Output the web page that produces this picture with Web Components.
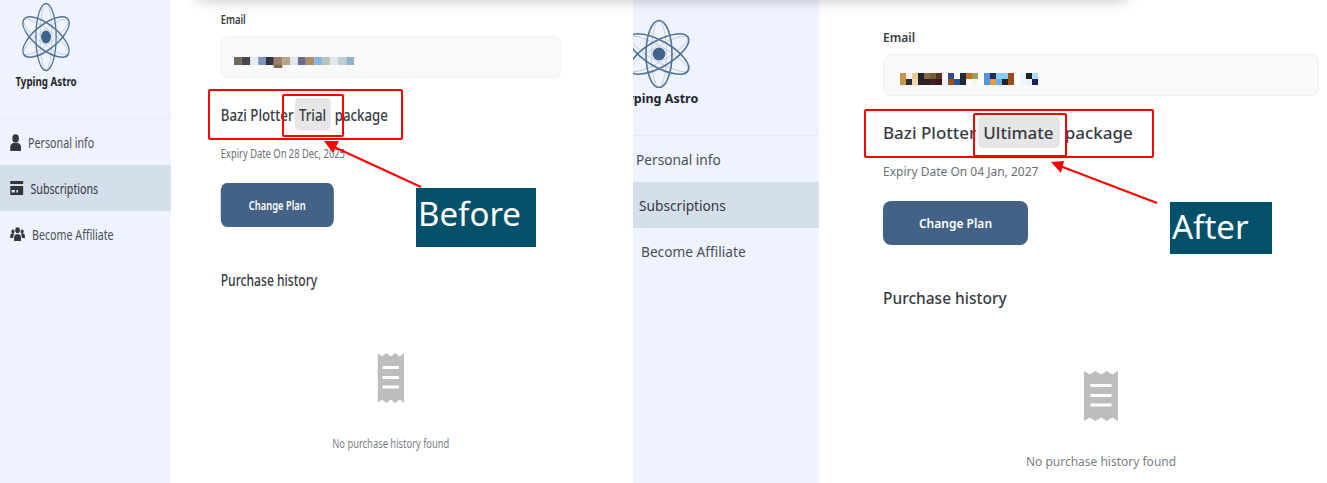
<!DOCTYPE html>
<html lang="en">
<head>
<meta charset="utf-8">
<title>Bazi Plotter subscriptions, before and after</title>
<style>
  html, body { margin: 0; background: #fff; }
  body { font-family: "Noto Sans", "Open Sans", sans-serif; }
</style>
</head>
<body>
<compare-board>
  <shot-pane slot="before" scale="0.78" shift-y="-17" style="--pane-w: 633px; --panel-top: 29px">
    <account-page plan="Trial" expiry="28 Dec, 2025" mask="before"></account-page>
  </shot-pane>
  <shot-pane slot="after" shift-x="-33" style="--pane-w: 694px">
    <account-page plan="Ultimate" expiry="04 Jan, 2027" mask="after"></account-page>
  </shot-pane>
</compare-board>

<script>
// pixelated email cells, one array per row
const MASKS = {
  before: {
    cell: 10.25, rowH: "8px 3px", top: 20,
    rows: [
      ["#6f6a5e","#444650","#e9eef4","#7c93c0","#2f3440","#a07d69","#b7a283","#dfe4ee","#6a6a8c","#ad8c62","#85b4e3","#b9c3bb","#e0e6ea","#c2cbd3","#8fb4c8"],
      [null,null,null,null,null,"#7a6a55"]
    ]
  },
  after: {
    cell: 6, rowH: "6px 6px", top: 18,
    rows: [
      ["#c8964a","#f8f3ea","#e8cc98","#22242a","#8c6542","#6f6038","#5a3020","#fff","#2f4f8f","#fff","#1c2a44","#c07418","#9c9c68","#fff","#4f94dc","#1f2e58","#88ccf4","#88ccf4","#9c4c20","#fff","#eaf6fc","#222","#a8dcf8"],
      ["#c8964a","#2b2b30","#f0d8a8","#22242a","#2e2220","#451e1e","#3a1a1a","#e8f6fa","#a0501e","#2455a5","#1e2a3a","#fff","#f8f8e8","#fff","#4f94dc","#e69a3c","#5cb0ee","#222","#9c4c20","#fff","#f0f8fc","#e6f4fc","#1c2058"]
    ]
  }
};

class AtomLogo extends HTMLElement {
  constructor() {
    super();
    this.attachShadow({ mode: "open" });
    this.shadowRoot.innerHTML = `
      <style>
        :host { display: block; width: 62px; height: 68px; }
        svg { display: block; width: 100%; height: 100%; overflow: visible; }
      </style>
      <svg viewBox="-31 -34 62 68" fill="none">
        <g stroke="#b9c7d6" stroke-width=".8">
          <ellipse rx="7.5" ry="33"/>
          <ellipse rx="7.5" ry="33" transform="rotate(60)"/>
          <ellipse rx="7.5" ry="33" transform="rotate(-60)"/>
        </g>
        <g stroke="#527395" stroke-width="1.6">
          <ellipse rx="13" ry="33.5"/>
          <ellipse rx="13" ry="33.5" transform="rotate(60)"/>
          <ellipse rx="13" ry="33.5" transform="rotate(-60)"/>
        </g>
        <circle r="6.4" fill="#3f6389"/>
      </svg>`;
  }
}
customElements.define("atom-logo", AtomLogo);

class NavItem extends HTMLElement {
  constructor() {
    super();
    this.attachShadow({ mode: "open" });
    this.shadowRoot.innerHTML = `
      <style>
        :host {
          display: flex;
          align-items: center;
          gap: 9px;
          height: 46px;
          padding-left: 13px;
          color: #4b5058;
          font-size: 13.7px;
        }
        :host([active]) { background: #d5deeb; color: #33383f; }
        ::slotted(svg) { display: block; flex: none; }
      </style>
      <slot name="icon"></slot>
      <slot></slot>`;
  }
}
customElements.define("nav-item", NavItem);

class SideNav extends HTMLElement {
  constructor() {
    super();
    this.attachShadow({ mode: "open" });
    this.shadowRoot.innerHTML = `
      <style>
        :host { display: block; background: #eef3fe; }
        .brand {
          display: flex;
          flex-direction: column;
          align-items: center;
          width: 78px;
          height: 115px;
          padding: 20px 0 0 20px;
        }
        .name {
          margin-top: 3px;
          font-size: 12.5px;
          line-height: 16px;
          font-weight: 700;
          color: #23262b;
          white-space: nowrap;
        }
        .rule { height: 1px; background: #e6ebf5; }
      </style>
      <div class="brand">
        <atom-logo></atom-logo>
        <span class="name">Typing Astro</span>
      </div>
      <div class="rule"></div>
      <nav-item>
        <svg slot="icon" width="14" height="17" viewBox="0 0 14 17" fill="#33373d"><circle cx="7" cy="4.4" r="4.2"/><path d="M0 17v-3.4C0 10.6 2.2 9 4.4 9h5.200c2.200 0 4.400 1.600 4.400 4.600V17z"/></svg>
        Personal info
      </nav-item>
      <nav-item active>
        <svg slot="icon" width="17" height="14" viewBox="0 0 17 14" fill="#33373d"><path d="M0 0h17v3H0zM0 5h17v9H0z"/><path fill="#e6ecf6" d="M2 9h4v2.500H2zM8 9h2v2.500H8z"/></svg>
        Subscriptions
      </nav-item>
      <nav-item>
        <svg slot="icon" width="19" height="14" viewBox="0 0 19 14" fill="#33373d"><circle cx="9.500" cy="3.200" r="3"/><circle cx="3.600" cy="4.400" r="2"/><circle cx="15.400" cy="4.400" r="2"/><path d="M5 14v-3.200C5 8.600 6.600 7.200 8.400 7.200h2.200c1.800 0 3.400 1.400 3.400 3.600V14zM0 11V9c0-1.400 1-2.400 2.200-2.400h2c.5 0 .9.100 1.200.4C4.400 8 3.900 9.400 3.900 11zM19 11V9c0-1.400-1-2.400-2.200-2.400h-2c-.5 0-.9.100-1.200.4 1 1 1.500 2.400 1.500 4z"/></svg>
        Become Affiliate
      </nav-item>`;
  }
}
customElements.define("side-nav", SideNav);

class PixelMask extends HTMLElement {
  connectedCallback() {
    if (this.shadowRoot) return;
    const { cell, rowH, top, rows } = MASKS[this.getAttribute("set")];
    this.attachShadow({ mode: "open" });
    const cells = rows.map((row, r) =>
      row.map((c, i) => c ? `<i style="background:${c};grid-area:${r + 1}/${i + 1}"></i>` : "").join("")
    ).join("");
    this.shadowRoot.innerHTML = `
      <style>
        :host { display: grid; grid-auto-columns: ${cell}px; grid-template-rows: ${rowH}; margin-top: ${top}px; }
        i { display: block; }
      </style>${cells}`;
  }
}
customElements.define("pixel-mask", PixelMask);

class PlanPanel extends HTMLElement {
  connectedCallback() {
    if (this.shadowRoot) return;
    this.attachShadow({ mode: "open" });
    this.shadowRoot.innerHTML = `
      <style>
        :host {
          display: flex;
          flex-direction: column;
          width: 436px;
          padding: var(--panel-top, 30px) 0 0 64px;
          color: #373c44;
        }
        .label { font-size: 12px; line-height: 16px; font-weight: 600; }
        .field {
          display: flex;
          align-items: flex-start;
          box-sizing: border-box;
          height: 42px;
          margin-top: 8px;
          padding-left: 16px;
          background: #f8f9fb;
          border: 1px solid #eef0f3;
          border-radius: 8px;
        }
        .plan {
          display: flex;
          align-items: baseline;
          box-sizing: border-box;
          margin-top: 20px;
          height: 32px;
          padding-top: 2px;
          font-size: 17px;
          line-height: 30px;
          font-weight: 500;
          white-space: nowrap;
        }
        .chip {
          display: block;
          margin: -2px 5px 0 2px;
          padding: 2px 6px 0 5px;
          background: #e6e6e6;
          border-radius: 5px;
        }
        .expiry { margin-top: 16px; font-size: 12px; line-height: 16px; color: #6b6f75; }
        .btn {
          display: flex;
          align-items: center;
          justify-content: center;
          width: 145px;
          height: 44px;
          margin-top: 21px;
          background: #436285;
          border-radius: 8px;
          color: #fff;
          font-size: 12px;
          font-weight: 600;
        }
        .history { margin-top: 41px; font-size: 15.500px; line-height: 24px; font-weight: 500; }
        .empty { display: flex; flex-direction: column; align-items: center; margin-top: 61px; }
        .empty svg { display: block; }
        .empty span { margin-top: 33px; font-size: 12px; line-height: 16px; color: #7a7f86; }
      </style>
      <div class="label">Email</div>
      <div class="field"><pixel-mask set="${this.getAttribute("mask")}"></pixel-mask></div>
      <div class="plan">Bazi Plotter<span class="chip">${this.getAttribute("plan")}</span>package</div>
      <div class="expiry">Expiry Date On ${this.getAttribute("expiry")}</div>
      <div class="btn">Change Plan</div>
      <div class="history">Purchase history</div>
      <div class="empty">
        <svg width="34" height="50" viewBox="0 0 34 50" fill="#bdbdbd">
          <path d="M0 0l5.600 3.400L11.300 0l5.700 3.400L22.700 0l5.700 3.400L34 0v50l-5.600-3.400-5.700 3.400-5.700-3.400-5.700 3.400-5.700-3.400L0 50z"/>
          <path fill="#fff" d="M6.500 13h21v3h-21zM6.500 23h21v3h-21zM6.500 32.500h21v3h-21z"/>
        </svg>
        <span>No purchase history found</span>
      </div>`;
  }
}
customElements.define("plan-panel", PlanPanel);

class AccountPage extends HTMLElement {
  connectedCallback() {
    if (this.shadowRoot) return;
    this.attachShadow({ mode: "open" });
    const a = n => this.getAttribute(n);
    this.shadowRoot.innerHTML = `
      <style>
        :host { display: grid; grid-template-columns: 219px auto; justify-content: start; width: 820px; height: 510px; background: #fff; }
      </style>
      <side-nav></side-nav>
      <plan-panel plan="${a("plan")}" expiry="${a("expiry")}" mask="${a("mask")}"></plan-panel>`;
  }
}
customElements.define("account-page", AccountPage);

// one screenshot in the comparison: the page inside can be squeezed or cropped
class ShotPane extends HTMLElement {
  connectedCallback() {
    if (this.shadowRoot) return;
    this.attachShadow({ mode: "open" });
    const scale = this.getAttribute("scale") || 1;
    const x = this.getAttribute("shift-x") || 0;
    const y = this.getAttribute("shift-y") || 0;
    this.shadowRoot.innerHTML = `
      <style>
        :host { display: block; flex: none; width: var(--pane-w); height: 483px; overflow: hidden; }
        .inner { width: 820px; margin: ${y}px 0 0 ${x}px; transform: scaleX(${scale}); transform-origin: 0 0; }
      </style>
      <div class="inner"><slot></slot></div>`;
  }
}
customElements.define("shot-pane", ShotPane);

class CompareBoard extends HTMLElement {
  constructor() {
    super();
    this.attachShadow({ mode: "open" });
    this.shadowRoot.innerHTML = `
      <style>
        :host { display: flex; position: relative; width: 1327px; height: 483px; overflow: hidden; }
        .bar {
          position: absolute;
          left: 195px;
          top: -20px;
          width: 935px;
          height: 20px;
          background: #fff;
          border-radius: 12px;
          box-shadow: 0 1px 14px rgba(0, 0, 0, .22);
        }
        svg { position: absolute; left: 0; top: 0; }
        .tag {
          position: absolute;
          display: flex;
          align-items: center;
          box-sizing: border-box;
          background: #02506a;
          color: #fff;
          font-size: 33px;
          padding-left: 2px;
          white-space: nowrap;
        }
        .before { left: 416px; top: 188px; width: 120px; height: 59px; padding-bottom: 8px; }
        .after { left: 1170px; top: 202px; width: 102px; height: 52px; padding-bottom: 4px; }
      </style>
      <slot name="before"></slot>
      <slot name="after"></slot>
      <div class="bar"></div>
      <svg width="1327" height="483" viewBox="0 0 1327 483" fill="none" stroke="#f00" stroke-width="2">
        <rect x="209" y="90" width="193" height="49" rx="1"/>
        <rect x="283" y="95" width="60" height="41" rx="1"/>
        <path d="M421 187L332 146"/>
        <path fill="#f00" stroke="none" d="M324 141L339 141L333 153z"/>
        <rect x="865" y="110" width="288" height="47" rx="1"/>
        <rect x="974" y="114" width="92" height="42" rx="1"/>
        <path d="M1157 203L1060 166"/>
        <path fill="#f00" stroke="none" d="M1051 162L1064 161L1061 173z"/>
      </svg>
      <div class="tag before">Before</div>
      <div class="tag after">After</div>`;
  }
}
customElements.define("compare-board", CompareBoard);
</script>
</body>
</html>
